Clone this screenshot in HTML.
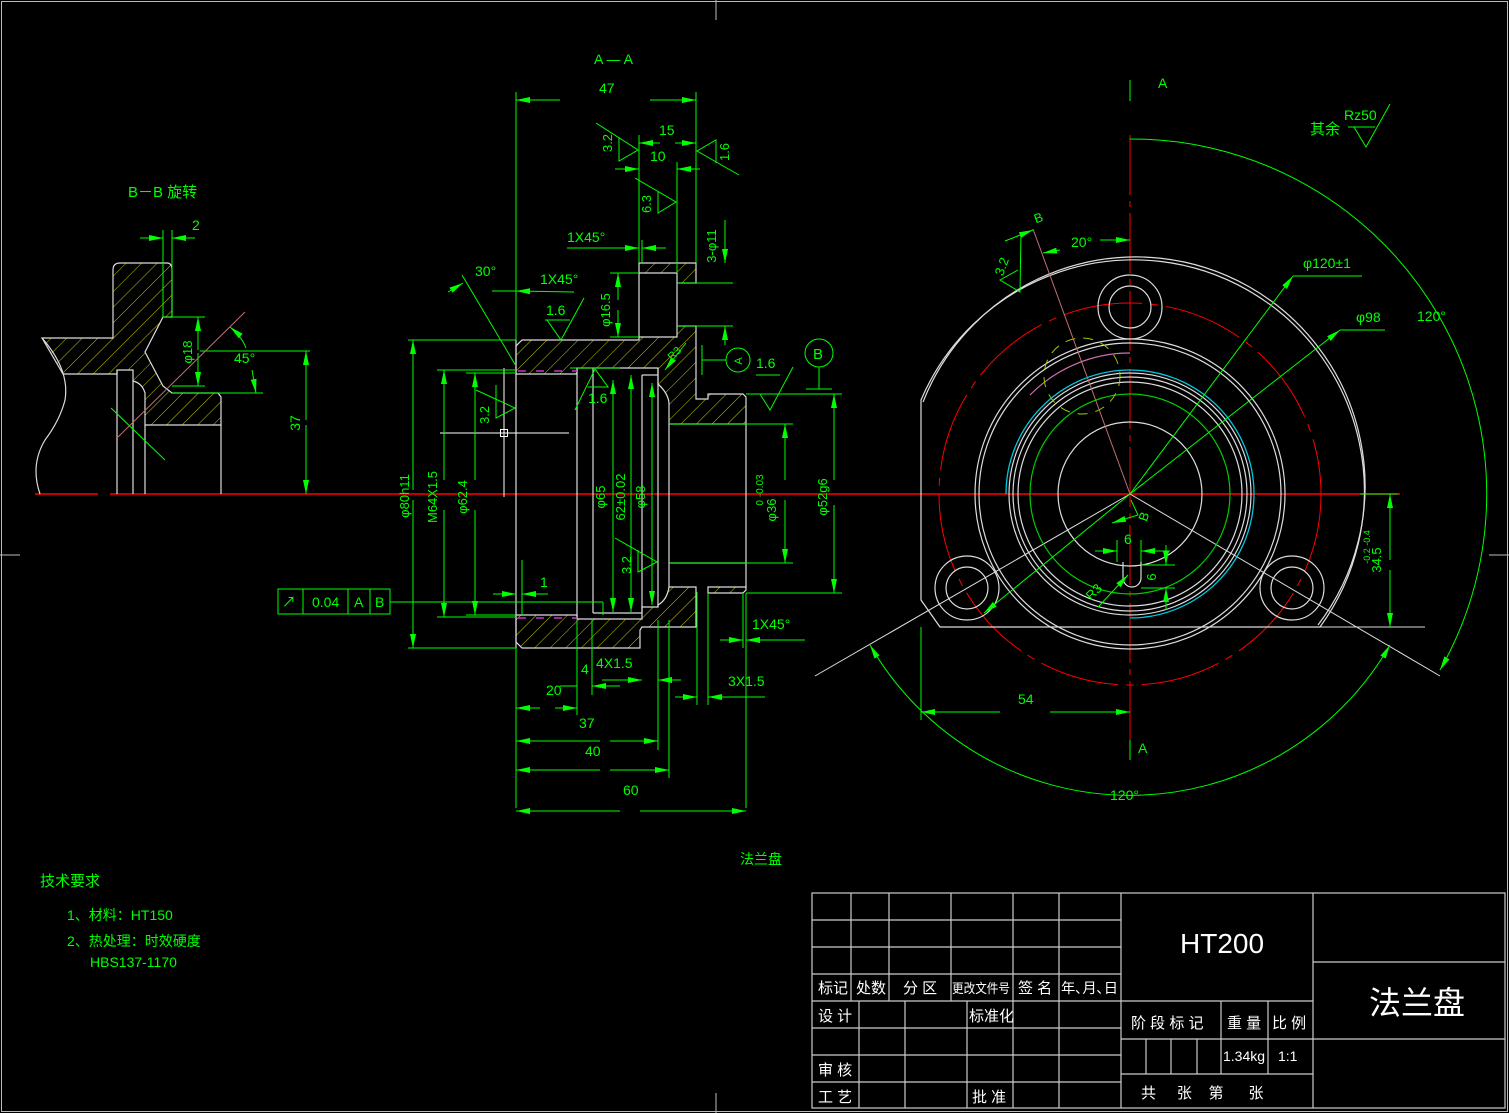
<!DOCTYPE html>
<html><head><meta charset="utf-8"><style>
html,body{margin:0;padding:0;background:#000;width:1509px;height:1113px;overflow:hidden}
svg{display:block}
text{font-family:"Liberation Sans","Noto Sans CJK SC",sans-serif;fill:#00ff00}
text.w{fill:#fff}
</style></head><body>
<svg width="1509" height="1113" viewBox="0 0 1509 1113" xmlns="http://www.w3.org/2000/svg">
<defs>
<pattern id="h" width="11" height="11" patternUnits="userSpaceOnUse" patternTransform="rotate(45)">
<line x1="0" y1="0" x2="0" y2="11" stroke="#c8c800" stroke-width="1"/>
</pattern>
<marker id="a" viewBox="0 0 14 6" refX="14" refY="3" markerWidth="14" markerHeight="6" markerUnits="userSpaceOnUse" orient="auto-start-reverse"><path d="M0,0 L14,3 L0,6z" fill="#00ff00"/></marker>
</defs>
<rect width="1509" height="1113" fill="#000"/>
<g stroke="#bbb" fill="none" stroke-width="1">
<rect x="1.5" y="1.5" width="1506" height="1110"/>
<line x1="716" y1="0" x2="716" y2="20"/><line x1="716" y1="1093" x2="716" y2="1113"/>
<line x1="0" y1="555" x2="20" y2="555"/><line x1="1489" y1="555" x2="1509" y2="555"/>
</g>
<g stroke="#ff0000" stroke-width="1.5" fill="none">
<line x1="35" y1="494" x2="98" y2="494"/><line x1="110" y1="494" x2="1400" y2="494"/>
<line x1="1130" y1="135" x2="1130" y2="740" stroke-width="1" stroke-dasharray="60,6,6,6"/>
<circle cx="1130" cy="494" r="191" stroke-width="1" stroke-dasharray="80,8,8,8"/>
</g>

<!-- LEFT VIEW B-B -->
<path d="M113,270 Q113,263 120,263 L167,263 Q172,263 172,270 L172,317 L163,317 L145,352 L163,386 L172,393 L218,393 L221,397 L221,425 L145,425 L145,393 Q142,383 133,381 L133,370 L117,370 L117,374 L63,374 L42,338 L113,338 Z" fill="url(#h)" stroke="#ddd" stroke-width="1.2"/>
<g stroke="#ddd" stroke-width="1.2" fill="none">
<path d="M42,338 Q70,370 65,400 Q60,420 45,440 Q30,465 40,494"/>
<line x1="117" y1="370" x2="117" y2="494"/><line x1="133" y1="381" x2="133" y2="494"/>
<line x1="145" y1="425" x2="145" y2="494"/><line x1="221" y1="425" x2="221" y2="494"/>
</g>
<g stroke="#00ff00" stroke-width="1" fill="none">
<line x1="163" y1="230" x2="163" y2="317"/><line x1="172" y1="230" x2="172" y2="317"/>
<line x1="140" y1="238" x2="163" y2="238" marker-end="url(#a)"/><line x1="195" y1="238" x2="172" y2="238" marker-end="url(#a)"/>
<line x1="163" y1="317" x2="205" y2="317"/><line x1="172" y1="386" x2="205" y2="386"/>
<line x1="198" y1="350" x2="198" y2="317" marker-end="url(#a)"/><line x1="198" y1="353" x2="198" y2="386" marker-end="url(#a)"/>
<line x1="172" y1="393" x2="263" y2="393"/>
<line x1="200" y1="351" x2="310" y2="351"/>
<line x1="306" y1="420" x2="306" y2="351" marker-end="url(#a)"/><line x1="306" y1="425" x2="306" y2="494" marker-end="url(#a)"/>
<path d="M230,327 Q242,337 246,348" marker-start="url(#a)"/>
<line x1="252" y1="370" x2="256" y2="393" marker-end="url(#a)"/>
<line x1="111" y1="408" x2="165" y2="460"/>
</g>
<line x1="118" y1="437" x2="245" y2="312" stroke="#c07070" stroke-width="1"/>
<text x="128" y="197" font-size="15">B－B 旋转</text>
<text x="192" y="230" font-size="14">2</text>
<text x="192" y="352" font-size="13" transform="rotate(-90 192 352)" text-anchor="middle">φ18</text>
<text x="234" y="363" font-size="14">45°</text>
<text x="300" y="423" font-size="14" transform="rotate(-90 300 423)" text-anchor="middle">37</text>

<!-- SECTION A-A -->
<path fill-rule="evenodd" d="M522,340 L639,340 L639,263 L696,263 L696,283 L677,283 L677,326 L696,326 L696,399 L708,399 L708,394 L743,394 L746,397 L746,424 L669,424 L669,403 Q668,393 658,384 L658,368 L577,368 L577,374 L516,374 L516,346 Z M639,273 L677,273 L677,337 L639,337 Z" fill="url(#h)" stroke="#ddd" stroke-width="1.2"/>
<path d="M516,615 L577,615 L577,619 L642,619 L642,607 L658,607 L658,605 Q667,600 669,587 L696,587 L696,627 L642,627 L640,630 L640,648 L522,648 L516,642 Z" fill="url(#h)" stroke="#ddd" stroke-width="1.2"/>
<path d="M708,587 L746,587 L746,590 L743,593 L708,593 Z" fill="url(#h)" stroke="#ddd" stroke-width="1.2"/>
<g stroke="#ddd" stroke-width="1.2" fill="none">
<line x1="516" y1="340" x2="516" y2="648"/>
<line x1="577" y1="368" x2="577" y2="619"/>
<line x1="593" y1="368" x2="593" y2="613"/>
<line x1="642" y1="375" x2="642" y2="613"/>
<line x1="658" y1="368" x2="658" y2="607"/>
<line x1="669" y1="424" x2="669" y2="587"/>
<line x1="746" y1="424" x2="746" y2="587"/>
<line x1="669" y1="563" x2="746" y2="563"/>
<line x1="593" y1="613" x2="642" y2="613"/>
<line x1="642" y1="375" x2="658" y2="375"/>
</g>
<g stroke="#cc33cc" stroke-width="1.5" stroke-dasharray="8,10"><line x1="518" y1="371" x2="577" y2="371"/><line x1="518" y1="618" x2="577" y2="618"/></g>
<g stroke="#fff" stroke-width="1" fill="none">
<line x1="504" y1="368" x2="504" y2="497"/><line x1="440" y1="433" x2="569" y2="433"/><rect x="500.5" y="429.5" width="7" height="7"/>
</g>
<g stroke="#00ff00" stroke-width="1" fill="none">
<line x1="516" y1="92" x2="516" y2="340"/><line x1="696" y1="92" x2="696" y2="263"/>
<line x1="560" y1="100" x2="516" y2="100" marker-end="url(#a)"/><line x1="650" y1="100" x2="696" y2="100" marker-end="url(#a)"/>
<line x1="639" y1="135" x2="639" y2="263"/><line x1="677" y1="162" x2="677" y2="273"/>
<line x1="660" y1="143" x2="639" y2="143" marker-end="url(#a)"/><line x1="675" y1="143" x2="696" y2="143" marker-end="url(#a)"/>
<line x1="615" y1="169" x2="639" y2="169" marker-end="url(#a)"/><line x1="700" y1="169" x2="677" y2="169" marker-end="url(#a)"/>
<path d="M596,123 L638,150 L619,161 L619,137"/>
<path d="M739,175 L697,151 L716,140 L716,163"/>
<path d="M635,178 L676,202 L658,213 L658,191"/>
<line x1="567" y1="248" x2="639" y2="248" marker-end="url(#a)"/><line x1="666" y1="248" x2="642" y2="248" marker-end="url(#a)"/>
<line x1="642" y1="240" x2="642" y2="263"/>
<line x1="725" y1="220" x2="725" y2="263" marker-end="url(#a)"/>
<line x1="677" y1="283" x2="733" y2="283"/><line x1="677" y1="326" x2="733" y2="326"/>
<line x1="725" y1="345" x2="725" y2="326" marker-end="url(#a)"/>
<line x1="610" y1="273" x2="639" y2="273"/><line x1="610" y1="337" x2="639" y2="337"/>
<line x1="618" y1="300" x2="618" y2="273" marker-end="url(#a)"/><line x1="618" y1="310" x2="618" y2="337" marker-end="url(#a)"/>
<line x1="448" y1="292" x2="463" y2="283" marker-end="url(#a)"/>
<line x1="462" y1="275" x2="516" y2="366"/>
<line x1="574" y1="292" x2="516" y2="291" marker-end="url(#a)"/>
<line x1="492" y1="291" x2="516" y2="291"/>
<path d="M547,320 L561,340 L584,298"/><line x1="545" y1="320" x2="570" y2="320"/>
<line x1="408" y1="340" x2="516" y2="340"/><line x1="408" y1="648" x2="516" y2="648"/>
<line x1="413" y1="490" x2="413" y2="340" marker-end="url(#a)"/><line x1="413" y1="500" x2="413" y2="648" marker-end="url(#a)"/>
<line x1="437" y1="370" x2="516" y2="370"/><line x1="437" y1="617" x2="516" y2="617"/>
<line x1="444" y1="480" x2="444" y2="370" marker-end="url(#a)"/><line x1="444" y1="510" x2="444" y2="617" marker-end="url(#a)"/>
<line x1="466" y1="373" x2="516" y2="373"/><line x1="466" y1="615" x2="516" y2="615"/>
<line x1="475" y1="480" x2="475" y2="373" marker-end="url(#a)"/><line x1="475" y1="510" x2="475" y2="615" marker-end="url(#a)"/>
<path d="M476,390 L515,408 L496,418 L496,385"/>
<path d="M575,410 L595,369 L608,387 L588,387"/>
<line x1="570" y1="368" x2="620" y2="368"/>
<line x1="613" y1="380" x2="613" y2="612" marker-start="url(#a)" marker-end="url(#a)"/>
<line x1="631" y1="375" x2="631" y2="612" marker-start="url(#a)" marker-end="url(#a)"/>
<line x1="652" y1="383" x2="652" y2="605" marker-start="url(#a)" marker-end="url(#a)"/>
<path d="M615,538 L657,562 L638,572 L638,550"/>
<line x1="669" y1="424" x2="793" y2="424"/><line x1="669" y1="563" x2="793" y2="563"/>
<line x1="785" y1="480" x2="785" y2="424" marker-end="url(#a)"/><line x1="785" y1="500" x2="785" y2="563" marker-end="url(#a)"/>
<line x1="746" y1="394" x2="842" y2="394"/><line x1="746" y1="593" x2="842" y2="593"/>
<line x1="834" y1="480" x2="834" y2="394" marker-end="url(#a)"/><line x1="834" y1="505" x2="834" y2="593" marker-end="url(#a)"/>
<path d="M760,394 L770,410 L793,367"/><line x1="756" y1="375" x2="780" y2="375"/>
<line x1="702" y1="345" x2="702" y2="375"/><line x1="702" y1="360" x2="726" y2="360"/>
<circle cx="738" cy="360" r="12"/>
<circle cx="819" cy="353" r="14"/><line x1="819" y1="367" x2="819" y2="389"/><line x1="806" y1="389" x2="832" y2="389"/>
<line x1="686" y1="343" x2="665" y2="370" marker-end="url(#a)"/>
<rect x="278" y="589" width="112" height="25"/><line x1="303" y1="589" x2="303" y2="614"/><line x1="348" y1="589" x2="348" y2="614"/><line x1="370" y1="589" x2="370" y2="614"/>
<line x1="390" y1="602" x2="603" y2="602"/><line x1="603" y1="602" x2="603" y2="615"/>
<line x1="493" y1="594" x2="516" y2="594" marker-end="url(#a)"/><line x1="548" y1="594" x2="522" y2="594" marker-end="url(#a)"/><line x1="522" y1="560" x2="522" y2="615"/>
<line x1="516" y1="648" x2="516" y2="808"/>
<line x1="592" y1="620" x2="592" y2="695"/><line x1="592" y1="686" x2="620" y2="686" marker-start="url(#a)"/>
<line x1="577" y1="620" x2="577" y2="715"/><line x1="577" y1="686" x2="560" y2="686"/>
<line x1="540" y1="708" x2="516" y2="708" marker-end="url(#a)"/><line x1="555" y1="708" x2="577" y2="708" marker-end="url(#a)"/>
<line x1="658" y1="620" x2="658" y2="750"/>
<line x1="600" y1="741" x2="516" y2="741" marker-end="url(#a)"/><line x1="610" y1="741" x2="658" y2="741" marker-end="url(#a)"/>
<line x1="669" y1="620" x2="669" y2="778"/>
<line x1="600" y1="770" x2="516" y2="770" marker-end="url(#a)"/><line x1="610" y1="770" x2="669" y2="770" marker-end="url(#a)"/>
<line x1="746" y1="593" x2="746" y2="808"/>
<line x1="620" y1="811" x2="516" y2="811" marker-end="url(#a)"/><line x1="640" y1="811" x2="746" y2="811" marker-end="url(#a)"/>
<line x1="602" y1="680" x2="642" y2="680" marker-end="url(#a)"/><line x1="681" y1="680" x2="658" y2="680" marker-end="url(#a)"/>
<line x1="697" y1="592" x2="697" y2="705"/><line x1="708" y1="593" x2="708" y2="705"/>
<line x1="675" y1="697" x2="697" y2="697" marker-end="url(#a)"/><line x1="765" y1="697" x2="708" y2="697" marker-end="url(#a)"/>
<line x1="743" y1="593" x2="743" y2="648"/>
<line x1="720" y1="640" x2="743" y2="640" marker-end="url(#a)"/><line x1="805" y1="640" x2="746" y2="640" marker-end="url(#a)"/>
</g>
<g font-size="14">
<text x="594" y="64">A — A</text>
<text x="599" y="93">47</text>
<text x="659" y="135">15</text>
<text x="650" y="161">10</text>
<text x="567" y="242">1X45°</text>
<text x="475" y="276">30°</text>
<text x="540" y="284">1X45°</text>
<text x="546" y="315">1.6</text>
<text x="588" y="403">1.6</text>
<text x="756" y="368">1.6</text>
<text x="813" y="359" font-size="15">B</text>
<text x="540" y="587">1</text>
<text x="282" y="607">↗</text><text x="312" y="607">0.04</text><text x="354" y="607">A</text><text x="375" y="607">B</text>
<text x="581" y="674">4</text>
<text x="596" y="668">4X1.5</text>
<text x="546" y="695">20</text>
<text x="579" y="728">37</text>
<text x="585" y="756">40</text>
<text x="623" y="795">60</text>
<text x="728" y="686">3X1.5</text>
<text x="752" y="629">1X45°</text>
<text x="740" y="864">法兰盘</text>
</g>
<g font-size="13" text-anchor="middle">
<text transform="translate(612,143) rotate(-90)">3.2</text>
<text transform="translate(729,152) rotate(-90)">1.6</text>
<text transform="translate(651,204) rotate(-90)">6.3</text>
<text transform="translate(716,246) rotate(-90)">3-φ11</text>
<text transform="translate(610,310) rotate(-90)">φ16.5</text>
<text transform="translate(409,496) rotate(-90)">φ80h11</text>
<text transform="translate(437,497) rotate(-90)">M64X1.5</text>
<text transform="translate(467,497) rotate(-90)">φ62.4</text>
<text transform="translate(489,415) rotate(-90)">3.2</text>
<text transform="translate(605,497) rotate(-90)">φ65</text>
<text transform="translate(625,497) rotate(-90)">62±0.02</text>
<text transform="translate(645,497) rotate(-90)">φ58</text>
<text transform="translate(631,565) rotate(-90)">3.2</text>
<text transform="translate(776,510) rotate(-90)">φ36</text>
<text transform="translate(763,490) rotate(-90)" font-size="10">0 -0.03</text>
<text transform="translate(827,497) rotate(-90)">φ52g6</text>
<text transform="translate(742,361) rotate(-90)" font-size="11">A</text>
<text transform="translate(677,356) rotate(-45)" font-size="11">R3</text>
</g>

<!-- RIGHT VIEW -->
<g stroke="#ddd" stroke-width="1.2" fill="none">
<path d="M921,400 A231,231 0 1 1 1320,627 L940,627 L921,600 Z"/>
<path d="M923,402 A229,229 0 1 1 1318,625"/>
<circle cx="1130" cy="494" r="151"/><circle cx="1130" cy="494" r="155"/>
<circle cx="1130" cy="494" r="121"/><circle cx="1130" cy="494" r="112"/><circle cx="1130" cy="494" r="117"/>
<circle cx="1130" cy="494" r="72"/>
<circle cx="1130" cy="307" r="32"/><circle cx="1130" cy="307" r="21"/>
<circle cx="967" cy="588" r="32"/><circle cx="967" cy="588" r="21"/>
<circle cx="1292" cy="588" r="32"/><circle cx="1292" cy="588" r="21"/>
<path d="M1123,562 L1123,578 A6,6 0 0 0 1141,578 L1141,562"/>
<line x1="1130" y1="494" x2="815" y2="676" stroke-width="1"/>
<line x1="1130" y1="494" x2="1440" y2="676" stroke-width="1"/>
<line x1="1320" y1="627" x2="1425" y2="627" stroke-width="1"/>
</g>
<path d="M1006,494 A124,124 0 1 1 1130,618" stroke="#00c8e0" stroke-width="1.3" fill="none"/>
<circle cx="1130" cy="494" r="100" stroke="#00cc00" stroke-width="1.2" fill="none"/>
<path d="M1030,395 A140,140 0 0 1 1130,353" stroke="#d070b0" stroke-width="1.2" fill="none"/>
<circle cx="1082" cy="376" r="38" stroke="#9c0" stroke-width="1" fill="none" stroke-dasharray="10,8"/>
<line x1="1033" y1="229" x2="1130" y2="494" stroke="#c07070" stroke-width="1"/>
<g stroke="#00ff00" stroke-width="1" fill="none">
<line x1="1130" y1="494" x2="1293" y2="276" marker-end="url(#a)"/><line x1="1293" y1="276" x2="1362" y2="276"/>
<line x1="1130" y1="494" x2="1340" y2="330" marker-end="url(#a)"/><line x1="1340" y1="330" x2="1385" y2="330"/>
<line x1="1130" y1="494" x2="984" y2="613" marker-end="url(#a)"/>
<path d="M1130,139 A355,355 0 0 1 1440,670" marker-end="url(#a)"/>
<path d="M870,645 A300,300 0 0 0 1390,645" marker-start="url(#a)" marker-end="url(#a)"/>
<line x1="921" y1="627" x2="921" y2="720"/>
<line x1="1000" y1="712" x2="921" y2="712" marker-end="url(#a)"/><line x1="1050" y1="712" x2="1130" y2="712" marker-end="url(#a)"/>
<line x1="1390" y1="560" x2="1390" y2="494" marker-end="url(#a)"/><line x1="1390" y1="570" x2="1390" y2="627" marker-end="url(#a)"/>
<line x1="1360" y1="494" x2="1398" y2="494"/>
<line x1="1005" y1="241" x2="1033" y2="230" marker-end="url(#a)"/>
<line x1="1060" y1="250" x2="1043" y2="253" marker-end="url(#a)"/><line x1="1100" y1="240" x2="1130" y2="240" marker-end="url(#a)"/>
<path d="M1021,232 L1020,292 L1000,280 L1018,270"/>
<path d="M1131,500 L1138,515 L1112,523" marker-end="url(#a)"/>
<line x1="1095" y1="551" x2="1117" y2="551" marker-end="url(#a)"/><line x1="1170" y1="551" x2="1141" y2="551" marker-end="url(#a)"/>
<line x1="1117" y1="540" x2="1117" y2="562"/><line x1="1141" y1="540" x2="1141" y2="562"/>
<line x1="1141" y1="565" x2="1175" y2="565"/><line x1="1141" y1="588" x2="1175" y2="588"/>
<line x1="1166" y1="545" x2="1166" y2="565" marker-end="url(#a)"/><line x1="1166" y1="610" x2="1166" y2="588" marker-end="url(#a)"/>
<line x1="1098" y1="607" x2="1128" y2="575" marker-end="url(#a)"/>
<line x1="1130" y1="740" x2="1130" y2="760"/>
<line x1="1130" y1="80" x2="1130" y2="101"/>
<path d="M1354,127 L1366,147 L1390,104"/><line x1="1348" y1="127" x2="1375" y2="127"/>
</g>
<g font-size="14">
<text x="1158" y="88">A</text>
<text x="1138" y="753">A</text>
<text x="1071" y="247">20°</text>
<text x="1303" y="268">φ120±1</text>
<text x="1356" y="322">φ98</text>
<text x="1417" y="321">120°</text>
<text x="1110" y="800">120°</text>
<text x="1018" y="704">54</text>
<text x="1124" y="544">6</text>
<text x="1310" y="134" font-size="15">其余</text>
<text x="1344" y="120">Rz50</text>
</g>
<g font-size="13" text-anchor="middle">
<text transform="translate(1040,222) rotate(-20)">B</text>
<text transform="translate(1006,268) rotate(-70)">3.2</text>
<text transform="translate(1148,518) rotate(-70)">B</text>
<text transform="translate(1156,577) rotate(-90)">6</text>
<text transform="translate(1097,595) rotate(-45)">R3</text>
<text transform="translate(1381,560) rotate(-90)">34.5</text>
<text transform="translate(1370,547) rotate(-90)" font-size="9">-0.2 -0.4</text>
</g>

<g font-size="15">
<text x="40" y="886">技术要求</text>
<text x="67" y="920" font-size="14">1、材料：HT150</text>
<text x="67" y="946" font-size="14">2、热处理：时效硬度</text>
<text x="90" y="967" font-size="14">HBS137-1170</text>
</g>

<!-- TITLE BLOCK -->
<g stroke="#ccc" stroke-width="1.2" fill="none">
<rect x="812" y="893" width="693" height="215"/>
<line x1="1121" y1="893" x2="1121" y2="1108"/><line x1="1313" y1="893" x2="1313" y2="1108"/>
<line x1="812" y1="920" x2="1121" y2="920"/><line x1="812" y1="947" x2="1121" y2="947"/><line x1="812" y1="974" x2="1121" y2="974"/><line x1="812" y1="1001" x2="1121" y2="1001"/>
<line x1="812" y1="1028" x2="1121" y2="1028"/><line x1="812" y1="1055" x2="1121" y2="1055"/><line x1="812" y1="1082" x2="1121" y2="1082"/>
<line x1="851" y1="893" x2="851" y2="1001"/><line x1="889" y1="893" x2="889" y2="1001"/><line x1="951" y1="893" x2="951" y2="1001"/>
<line x1="1013" y1="893" x2="1013" y2="1108"/><line x1="1059" y1="893" x2="1059" y2="1108"/>
<line x1="859" y1="1001" x2="859" y2="1108"/><line x1="905" y1="1001" x2="905" y2="1108"/><line x1="967" y1="1001" x2="967" y2="1108"/>
<line x1="1121" y1="1001" x2="1313" y2="1001"/><line x1="1121" y1="1039" x2="1505" y2="1039"/><line x1="1121" y1="1074" x2="1313" y2="1074"/>
<line x1="1313" y1="962" x2="1505" y2="962"/>
<line x1="1221" y1="1001" x2="1221" y2="1074"/><line x1="1268" y1="1001" x2="1268" y2="1074"/>
<line x1="1146" y1="1039" x2="1146" y2="1074"/><line x1="1171" y1="1039" x2="1171" y2="1074"/><line x1="1197" y1="1039" x2="1197" y2="1074"/>
</g>
<g font-size="15">
<text class="w" x="818" y="993">标记</text><text class="w" x="856" y="993">处数</text><text class="w" x="903" y="993">分 区</text>
<text class="w" x="952" y="993" font-size="13" textLength="58" lengthAdjust="spacingAndGlyphs">更改文件号</text><text class="w" x="1018" y="993">签 名</text><text class="w" x="1061" y="993" font-size="14" textLength="57" lengthAdjust="spacingAndGlyphs">年､月､日</text>
<text class="w" x="818" y="1021">设 计</text><text class="w" x="969" y="1021">标准化</text>
<text class="w" x="818" y="1075">审 核</text><text class="w" x="818" y="1102">工 艺</text><text class="w" x="972" y="1102">批 准</text>
<text class="w" x="1131" y="1028">阶 段 标 记</text><text class="w" x="1227" y="1028">重 量</text><text class="w" x="1272" y="1028">比 例</text>
<text class="w" x="1223" y="1061" font-size="14">1.34kg</text><text class="w" x="1278" y="1061" font-size="14">1:1</text>
<text class="w" x="1141" y="1098">共&#160;&#160;&#160;&#160;&#160;张&#160;&#160;&#160;&#160;第&#160;&#160;&#160;&#160;&#160;&#160;张</text>
<text class="w" x="1180" y="953" font-size="28">HT200</text>
<text class="w" x="1369" y="1014" font-size="32">法兰盘</text>
</g>
</svg>
</body></html>
